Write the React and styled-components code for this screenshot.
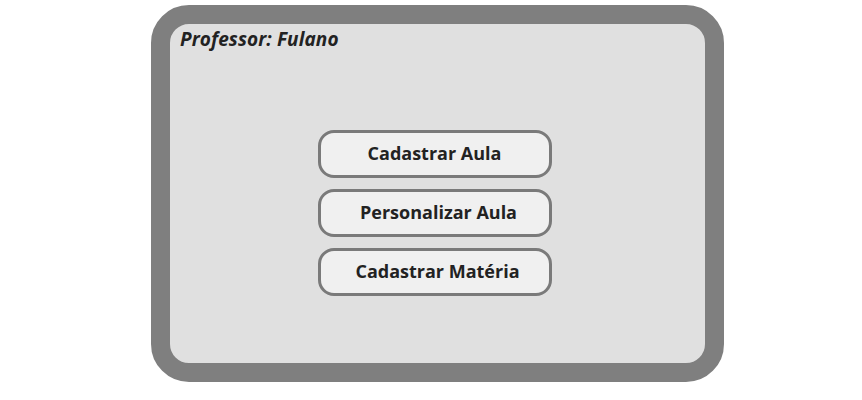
import React from "react";
import styled, { createGlobalStyle } from "styled-components";

const GlobalStyle = createGlobalStyle`
  body {
    margin: 0;
    background: #fff;
    font-family: "Open Sans", "DejaVu Sans", sans-serif;
  }
`;

const Page = styled.div`
  width: 862px;
  height: 400px;
  padding: 5px 0 0 151px;
  box-sizing: border-box;
`;

const Card = styled.div`
  width: 573px;
  height: 377px;
  box-sizing: border-box;
  border: 19px solid #7f7f7f;
  border-radius: 38px;
  background: #e0e0e0;
  padding: 3px 8px 0 10px;
  display: flex;
  flex-direction: column;
`;

const Title = styled.h1`
  margin: 0;
  font-size: 19px;
  font-weight: 700;
  font-style: italic;
  color: #222;
  line-height: 24px;
  letter-spacing: 0.1px;
`;

const Menu = styled.div`
  margin-top: 79px;
  display: flex;
  flex-direction: column;
  align-items: center;
  gap: 11px;
  padding-right: 8px;
`;

const MenuButton = styled.button`
  width: 234px;
  height: 48px;
  box-sizing: border-box;
  border: 3px solid #7a7a7a;
  border-radius: 16px;
  background: #f0f0f0;
  color: #222;
  font-family: "Open Sans", "DejaVu Sans", sans-serif;
  font-size: 18px;
  font-weight: 700;
  padding: 0 0 2px ${(p) => p.$shift || 0}px;
  cursor: pointer;
`;

export default function App() {
  return (
    <>
      <GlobalStyle />
      <Page>
        <Card>
          <Title>Professor: Fulano</Title>
          <Menu>
            <MenuButton>Cadastrar Aula</MenuButton>
            <MenuButton $shift={8}>Personalizar Aula</MenuButton>
            <MenuButton $shift={6}>Cadastrar Matéria</MenuButton>
          </Menu>
        </Card>
      </Page>
    </>
  );
}
